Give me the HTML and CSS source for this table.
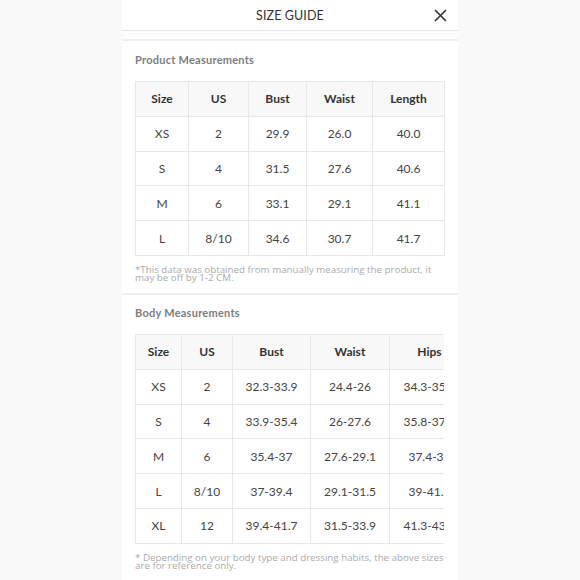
FILE: index.html
```html
<!DOCTYPE html>
<html>
<head>
<meta charset="utf-8">
<link rel="stylesheet" href="styles.css">
</head>
<body>
<div class="panel">
  <div class="header">
    <span class="title">SIZE GUIDE</span>
    <svg class="close" width="13" height="13" viewBox="0 0 13 13"><path d="M1 1L12 12M12 1L1 12" stroke="#333" stroke-width="1.6" fill="none"/></svg>
  </div>
  <div class="gap"></div>
  <div class="card first">
    <div class="sec-title">Product Measurements</div>
    <table class="tbl t1">
      <colgroup><col style="width:53px"><col style="width:60px"><col style="width:58px"><col style="width:66px"><col style="width:72px"></colgroup>
      <tr class="head"><th>Size</th><th>US</th><th>Bust</th><th>Waist</th><th>Length</th></tr>
      <tr><td>XS</td><td>2</td><td>29.9</td><td>26.0</td><td>40.0</td></tr>
      <tr><td>S</td><td>4</td><td>31.5</td><td>27.6</td><td>40.6</td></tr>
      <tr><td>M</td><td>6</td><td>33.1</td><td>29.1</td><td>41.1</td></tr>
      <tr><td>L</td><td>8/10</td><td>34.6</td><td>30.7</td><td>41.7</td></tr>
    </table>
    <p class="note">*This data was obtained from manually measuring the product, it may be off by 1-2 CM.</p>
  </div>
  <div class="card second">
    <div class="sec-title">Body Measurements</div>
    <div class="clip">
      <table class="tbl t2">
        <colgroup><col style="width:46px"><col style="width:51px"><col style="width:78px"><col style="width:79px"><col style="width:80px"></colgroup>
        <tr class="head"><th>Size</th><th>US</th><th>Bust</th><th>Waist</th><th>Hips</th></tr>
        <tr><td>XS</td><td>2</td><td>32.3-33.9</td><td>24.4-26</td><td>34.3-35.8</td></tr>
        <tr><td>S</td><td>4</td><td>33.9-35.4</td><td>26-27.6</td><td>35.8-37.4</td></tr>
        <tr><td>M</td><td>6</td><td>35.4-37</td><td>27.6-29.1</td><td>37.4-39</td></tr>
        <tr><td>L</td><td>8/10</td><td>37-39.4</td><td>29.1-31.5</td><td>39-41.3</td></tr>
        <tr><td>XL</td><td>12</td><td>39.4-41.7</td><td>31.5-33.9</td><td>41.3-43.7</td></tr>
      </table>
    </div>
    <p class="note">* Depending on your body type and dressing habits, the above sizes are for reference only.</p>
  </div>
</div>
</body>
</html>
```
FILE: styles.css
```css
html, body {
  margin: 0;
  padding: 0;
  background: #f9f9f9;
  height: 580px;
  overflow: hidden;
}
.panel {
  width: 336px;
  margin-left: 122px;
  background: #fff;
  font-family: Lato, "Liberation Sans", sans-serif;
  color: #333;
  height: 580px;
}
.header {
  height: 30px;
  border-bottom: 1px solid #e4e4e4;
  display: flex;
  align-items: center;
  justify-content: center;
  position: relative;
}
.title {
  font-size: 12.5px;
  letter-spacing: 0.1px;
  color: #333;
}
.close {
  position: absolute;
  right: 11px;
  top: 9px;
}
.gap {
  height: 8px;
  background: #fcfcfc;
  border-bottom: 2px solid #efefef;
}
.card {
  padding: 12px 13px 0 13px;
  background: #fff;
}
.card.first {
  height: 240px;
  border-bottom: 2px solid #efefef;
}
.card.second {
  padding-top: 11px;
}
.sec-title {
  font-size: 11px;
  font-weight: 700;
  color: #7d7d7d;
  line-height: 14px;
  letter-spacing: 0.25px;
}
.tbl {
  border-collapse: collapse;
  table-layout: fixed;
  margin-top: 14px;
  font-size: 12px;
}
.clip {
  width: 309px;
  overflow: hidden;
  margin-top: 14px;
}
.clip .tbl {
  margin-top: 0;
  width: 334px;
}
.t1 { width: 309px; }
.tbl th, .tbl td {
  border: 1px solid #e8e8e8;
  height: 33.8px;
  padding: 0;
  text-align: center;
  white-space: nowrap;
}
.tbl th {
  background: #f8f8f8;
  font-weight: 700;
  color: #333;
}
.tbl td {
  color: #444;
}
.note {
  margin: 10px 0 0 0;
  font-family: "Open Sans", "DejaVu Sans", sans-serif;
  font-size: 9.75px;
  line-height: 8.5px;
  color: #ababab;
  padding-right: 0;
}
```
